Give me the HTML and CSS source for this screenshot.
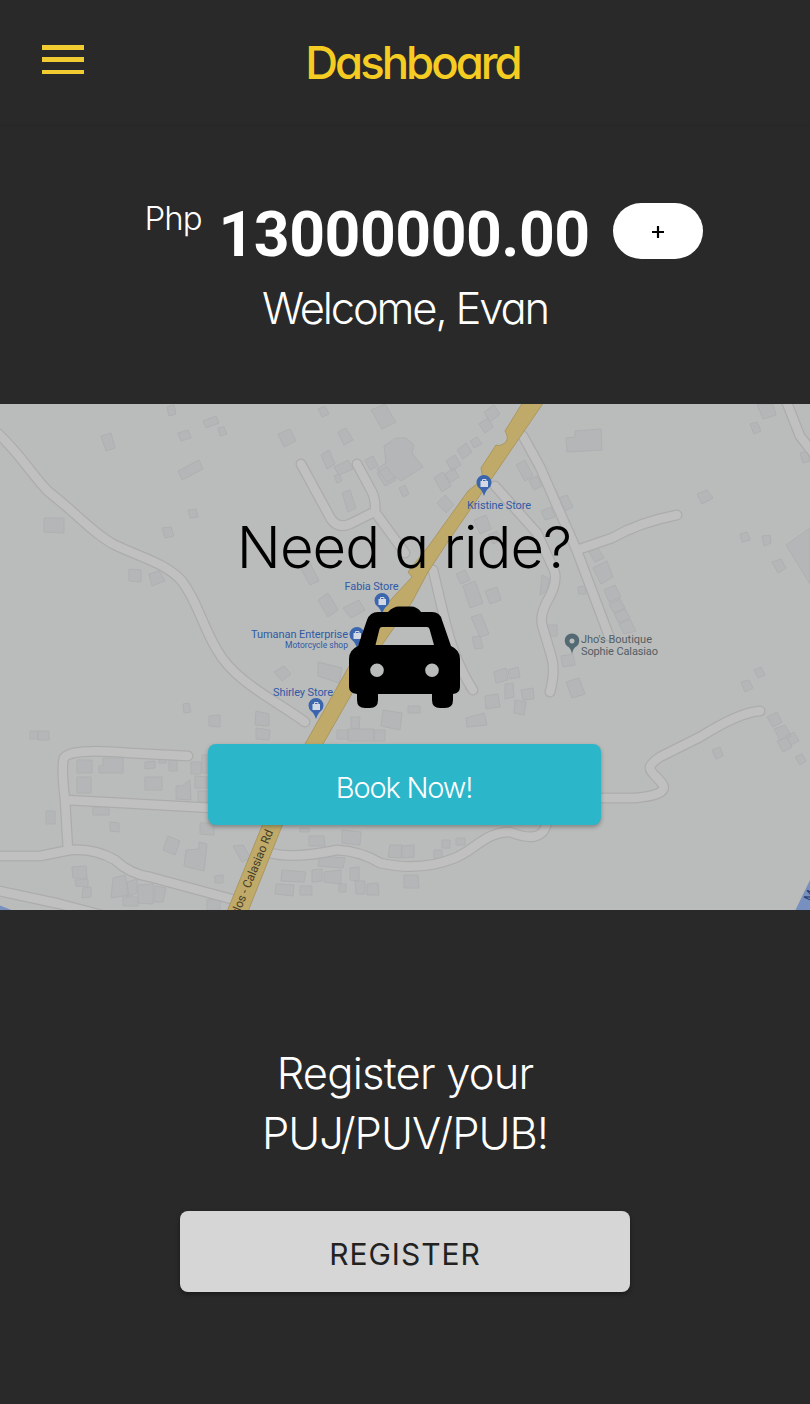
FILE: index.html
```html
<!DOCTYPE html>
<html lang="en">
<head>
<meta charset="utf-8">
<title>Dashboard</title>
<link rel="stylesheet" href="styles.css">
</head>
<body>
<header class="topbar">
  <button class="menu" aria-label="Menu"><span></span><span></span><span></span></button>
  <h1 class="title">Dashboard</h1>
</header>
<section class="wallet">
  <div class="balance">
    <span class="currency">Php</span>
    <strong class="amount">13000000.00</strong>
    <button class="topup"><svg width="12" height="12" viewBox="0 0 12 12"><path d="M6 0v12M0 6h12" stroke="#000" stroke-width="2.2"/></svg></button>
  </div>
  <p class="welcome">Welcome, Evan</p>
</section>
<section class="ride">
  <svg class="map" viewBox="0 404 810 506" width="810" height="506">
    <defs>
      <g id="roads">
        <path d="M-6 430C20 452 35 480 50 493C75 512 95 535 115 545C140 557 165 563 181 580C197 600 202 625 217 650C235 682 275 700 305 722"/>
        <path d="M301 464L331 519Q338 529 350 524L374 512"/>
        <path d="M357 464L372 492Q376 500 375 512L405 553"/>
        <path d="M523 436L540 467L577 551L609 636"/>
        <path d="M495 486L537 533L554 570Q558 580 550 596Q538 616 543 628L551 655Q556 670 550 692"/>
        <path d="M577 550L612 538Q640 522 677 515"/>
        <path d="M433 570L446 625Q456 664 473 690"/>
        <path d="M785 398L800 436L814 454"/>
        <path d="M188 756L130 753Q70 748 64 758Q61 765 65 800L68 850"/>
        <path d="M66 800L140 804L212 808"/>
        <path d="M-5 856L40 856L70 850Q95 848 115 860Q130 874 150 877L235 900"/>
        <path d="M-5 890L60 904L105 916"/>
        <path d="M268 852Q290 860 337 850Q360 851 380 863Q420 872 455 858C475 850 485 832 510 832Q540 844 546 826"/>
        <path d="M600 798H635Q668 795 663 785C655 772 640 770 660 757L700 737Q740 712 760 711"/>
      </g>
    </defs>
    <rect class="land" y="404" width="810" height="506"/>
    <path class="houses" d="M167 407l7-2 2 9-7 2zM203 421l13-5 3 7-13 5zM218 428l6-1 3 7-7 2zM178 433l10-3 3 8-10 3zM101 436l10-3 4 15-9 3zM178 471l21-11 4 9-21 11zM188 510l8-1 2 8-8 1zM162 528l9-1 3 9-9 2zM44 518h20v15l-20-1zM129 569l12 1v12l-12-1zM149 574l10-3 6 10-13 5zM318 409l7-3 4 8-7 3zM371 410l14-6 11 18-14 7zM278 434l12-5 6 12-12 6zM338 432l8-4 7 12-9 5zM321 455l8-5 6 14-8 5zM334 467l14-7 5 9-14 6zM365 460l8-4 5 10-8 4zM384 446l12-8h10l8 7-2 8 11 14-22 14-5-4-9 5-10-13 9-6zM377 473l10-6 9 13-11 6zM399 488l6-3 4 9-6 3zM342 493l8-3 6 18-8 4zM334 476l5-2 3 7-5 2zM434 478l9-6 8 14-9 6zM446 461l9-6 6 10-9 6zM457 450l9-7 6 9-9 7zM470 441l7-4 5 7-8 4zM445 474l9-6 5 9-9 6zM437 503l8-8 9 10-8 8zM484 412l10-7 6 9-10 8zM479 424l9-6 5 9-8 6zM516 465l9-5 8 16-8 5zM529 480l8-4 5 10-8 4zM474 520l12-5 5 14-11 5zM488 535l9-4 5 9-9 4zM456 574l9-4 5 10-9 4zM463 586l12-5 8 22-13 5zM485 591l12-4 4 13-11 4zM471 617l10-3 8 20-9 3zM472 637l8-1 3 12-8 1zM318 600l10-7 10 17-10 7zM300 567l10-4 9 18-9 4zM343 608l16-8 6 10-14 8zM566 438l9-1v-6l26-2 1 21-35 2zM757 404h16l3 11-13 4zM750 424l7-2 4 9-7 3zM800 453l8-2 2 10-7 2zM697 494l10-4 6 8-11 6zM740 534l7-2 3 8-8 2zM762 536l8-1 1 8-7 3zM772 562l9-3 5 9-8 5zM786 545l24-17v56zM559 498l8-3 6 12-8 4zM541 511l10-4 4 10-10 3zM589 552l9-4 6 10-9 4zM593 568l14-7 6 16-12 7zM604 590l11-5 6 12-12 5zM609 604l11-5 5 9-11 5zM614 614l11-5 5 9-11 5zM619 624l11-5 6 12-12 3zM578 587l7-1 1 8h-7zM547 625h10v11h-10zM542 575l7 4-2 12-7 4zM30 731h8v8h-8zM38 731h11v9h-11zM183 704l6-1 2 9-7 1zM209 716l11-1v12l-11-1zM256 711l13 3v12l-14-1zM256 728l14 2-1 10-13-1zM77 760h15v13h-15zM103 758h20v15h-24v-7h4zM77 777h14v16h-14zM145 777h17v13h-17zM145 762l10-1v7l-10 1zM169 759h8v12h-8zM159 756h7v7h-7zM176 786h6l8-6 1 20-15-1zM191 762h10v12h-10zM202 755h8v18h-8zM195 776l13 1v11h-13zM198 791h12v11h-12zM46 811h9v13h-9zM93 807h16v8h-16zM110 822l9 1v9l-9-1zM168 836l12 5-5 14-12-5zM186 850l13-1v-7l8 2-3 27-20-5zM72 867l14-1 1 12h-14zM75 880l13-1v8l-12-1zM83 888l8-1v10l-9 1zM113 878l12-3 4 20-18 3zM127 882l10-3v14l-10 4zM138 885l15-1v20l-15-1zM155 886l11 2-3 14h-9zM123 897h15v9h-15zM200 823h14v12l-14-1zM233 846l10-1 8 13-9 4zM215 876l8-1v8h-8zM207 900l13-2v12h-13zM274 672l10-6 7 8-9 7zM318 662l24 6-3 15-21-7zM337 730h11v9h-11zM348 729h26v12h-26zM374 730h11v11h-11zM351 717h9l-1 12-8-1zM383 710l19 3-2 17-19-4zM408 706h12v7h-12zM466 718l18-5 3 12-20 2zM485 696l13-2 2 13-14 2zM494 672l12-4 2 12-12 3zM508 670l10-3 2 10-10 2zM505 684l8-1 1 14-9 2zM515 700l11 2-2 13-10-2zM521 690l12-2 1 11-11 1zM465 681l7-2 2 10-8 1zM309 836h15l1 10h-16zM342 830l19 2-1 13-18-2zM300 828h9v4h-9zM390 845h12l-1 13-13-1zM402 846l12-1v12l-12 1zM434 850h8v8h-8zM442 840h8v8h-8zM456 838h9v7h-9zM320 856l25 2-2 10-25-2zM282 870l24 2-2 10-23-1zM324 872l17-2v14l-17-2zM312 870l10-1v12l-10 1zM350 868l9-1v14l-9-1zM276 884l18 1-1 11-18-2zM300 886h12v9h-12zM339 884h7v8h-7zM355 881h10v13h-9zM367 884l11-1 1 12h-12zM404 875h14l1 13h-15zM566 682l13-4 6 16-13 4zM561 656l12-2 2 11-12 2zM741 682l8-2 4 8-8 4zM754 670l7-3 4 8-7 3zM712 750l8-3 3 9-7 3zM767 717l10-5 5 10-9 5zM774 729l11-4 6 11-11 4zM777 741l10-4 5 10-9 5zM786 736l8-4 5 9-8 4zM795 757l7-3 4 7-6 4z"/>
    <use href="#roads" class="road-edge"/>
    <use href="#roads" class="road-fill"/>
    <path class="highway" d="M523 402L505 431Q509 437 506 442Q500 447 496 445L481 468L483 479L468 491L430 544L408 572L412 577L385 606L348 668L305 744L262 826L226 914H247L282 826L323 744L370 662L412 602L428 572L447 543L492 478L544 402z"/>
    <path class="water" d="M-1 905L14 911H-1zM811 878L795 911H811z"/>
    <g class="pins">
      <path id="pin" d="M484 496Q482 490 479 488A7.500 7.500 0 1 1 489 488Q486 490 484 496z"/>
      <use href="#pin" x="-102" y="118"/><use href="#pin" x="-127" y="152"/><use href="#pin" x="-168" y="223"/>
    </g>
    <g id="bag" class="bag"><rect x="480.500" y="481" width="7.500" height="6"/><path d="M482.500 481.500v-2h3.500v2"/></g>
    <use href="#bag" x="-102" y="118"/><use href="#bag" x="-127" y="152"/><use href="#bag" x="-168" y="223"/>
    <path class="place" fill-rule="evenodd" d="M572 654Q571 648 567 646A7.300 7.300 0 1 1 577 646Q573 648 572 654zM572 638.500a2.500 2.500 0 1 0 0 5a2.500 2.500 0 1 0 0-5z"/>
    <g class="labels">
      <text x="467" y="509" textLength="64">Kristine Store</text>
      <text x="344.500" y="590" textLength="54">Fabia Store</text>
      <text x="251" y="637.500" textLength="97">Tumanan Enterprise</text>
      <text x="285" y="648" textLength="63" class="small">Motorcycle shop</text>
      <text x="273" y="695.500" textLength="60">Shirley Store</text>
      <text x="581" y="642.500" textLength="71" class="grey">Jho's Boutique</text>
      <text x="581" y="655" textLength="77" class="grey">Sophie Calasiao</text>
      <text class="street" transform="translate(239 915) rotate(-67.500)" textLength="90">rlos - Calasiao Rd</text>
      <text class="street blue" transform="translate(811 902) rotate(-65)">M</text>
    </g>
  </svg>
  <h2 class="question">Need a ride?</h2>
  <svg class="car" viewBox="349 606 111 103" width="111" height="103">
    <path fill-rule="evenodd" d="M388 612Q393 606.500 399 606.500H411Q417 606.500 421 612H432Q440 612 442 620L451 646Q460 650 460 659V687Q460 693 453 694V700Q453 708 445 708H440Q432 708 432 700V694H378V700Q378 708 370 708H365Q357 708 357 700V694Q349 693 349 687V659Q349 650 358 646L367 620Q370 612 378 612zM382 627Q380 627 379.500 629L375.500 645H434L429.500 629Q429 627 427 627zM377 663.500a6.800 6.800 0 1 0 0 13.600a6.800 6.800 0 1 0 0-13.600zM432 663.500a6.800 6.800 0 1 0 0 13.600a6.800 6.800 0 1 0 0-13.600z"/>
  </svg>
  <button class="book">Book Now!</button>
</section>
<section class="operator">
  <p class="pitch"><span class="line-a">Register your</span><br><span class="line-b">PUJ/PUV/PUB!</span></p>
  <button class="register">REGISTER</button>
</section>
</body>
</html>
```
FILE: styles.css
```css
* { box-sizing: border-box; margin: 0; padding: 0; }
body {
  width: 810px; height: 1404px; overflow: hidden;
  background: #292929; color: #fff;
  font-family: Inter, "Open Sans", sans-serif; font-weight: 300;
  font-feature-settings: "cv11";
}
button { border: 0; font: inherit; font-feature-settings: inherit; }
.topbar { height: 126px; border-bottom: 1px solid #262626; display: grid; grid-template-columns: 126px 1fr 111px; }
.menu { background: none; margin: 45px 0 0 42px; width: 42px; height: 29px; display: flex; flex-direction: column; justify-content: space-between; }
.menu span { height: 4.500px; background: #f0cb32; }
.title { text-align: center; color: #f5cc22; font-size: 45.500px; line-height: 56px; font-weight: 450; letter-spacing: -3px; padding-top: 35px; }
.wallet { height: 278px; padding-top: 76px; }
.balance { display: flex; height: 58px; padding-left: 144.500px; align-items: flex-start; }
.currency { width: 74px; font-size: 33px; line-height: 32px; letter-spacing: -1px; }
.amount { width: 394.500px; font: 700 62.500px/64px Roboto, sans-serif; letter-spacing: -.500px; padding-top: 1px; }
.topup { width: 90px; height: 56px; border-radius: 28px; background: #fff; margin-top: 1px; display: flex; align-items: center; justify-content: center; padding-top: 2px; }
.welcome { text-align: center; font-size: 43.500px; line-height: 54px; margin-top: 21px; letter-spacing: -2.150px; }
.ride { position: relative; height: 506px; display: flex; flex-direction: column; align-items: center; color: #000; padding-right: 2px; }
.map { position: absolute; inset: 0; }
.question { position: relative; font-size: 58px; font-weight: 300; line-height: 70px; margin-top: 108px; letter-spacing: -1px; }
.car { position: relative; margin-top: 24px; }
.book { position: relative; margin-top: 35px; width: 393px; height: 81px; border-radius: 8px; background: #2bb6ca; color: #fff; font-size: 29px; padding-top: 6px; letter-spacing: -1.200px; box-shadow: 0 2px 4px rgba(0,0,0,.3); }
.operator { height: 494px; display: flex; flex-direction: column; align-items: center; padding-top: 133px; }
.pitch { text-align: center; font-size: 43.500px; line-height: 60px; }
.line-a { letter-spacing: -.800px; }
.line-b { letter-spacing: -1px; }
.register { width: 450px; height: 81px; margin-top: 48px; border-radius: 8px; background: #d6d6d6; color: #222; font-size: 30px; font-weight: 400; letter-spacing: 1px; padding-top: 5px; box-shadow: 0 2px 4px rgba(0,0,0,.4); }
.land { fill: #babcbb; }
.houses { fill: #b4b6b7; stroke: #aeb0b1; stroke-width: 1; }
.road-edge, .road-fill { fill: none; stroke-linecap: round; stroke-linejoin: round; }
.road-edge { stroke: #acacad; stroke-width: 11px; }
.road-fill { stroke: #c0c0c0; stroke-width: 8.500px; }
.highway { fill: #c0aa69; stroke: #ab9761; stroke-width: 1; }
.water { fill: #7790c0; }
.pins { fill: #3b66ad; }
.bag { fill: #d3d9e4; stroke: #d3d9e4; }
.bag rect { stroke: none; }
.bag path { fill: none; }
.place { fill: #536a75; }
.labels { font: 400 11px Roboto, sans-serif; fill: #2f5aa6; }
.labels .small { font-size: 8.500px; }
.labels .grey { fill: #525e64; }
.labels .street { font-size: 12px; fill: #453e29; }
.labels .blue { fill: #263e75; }
```
